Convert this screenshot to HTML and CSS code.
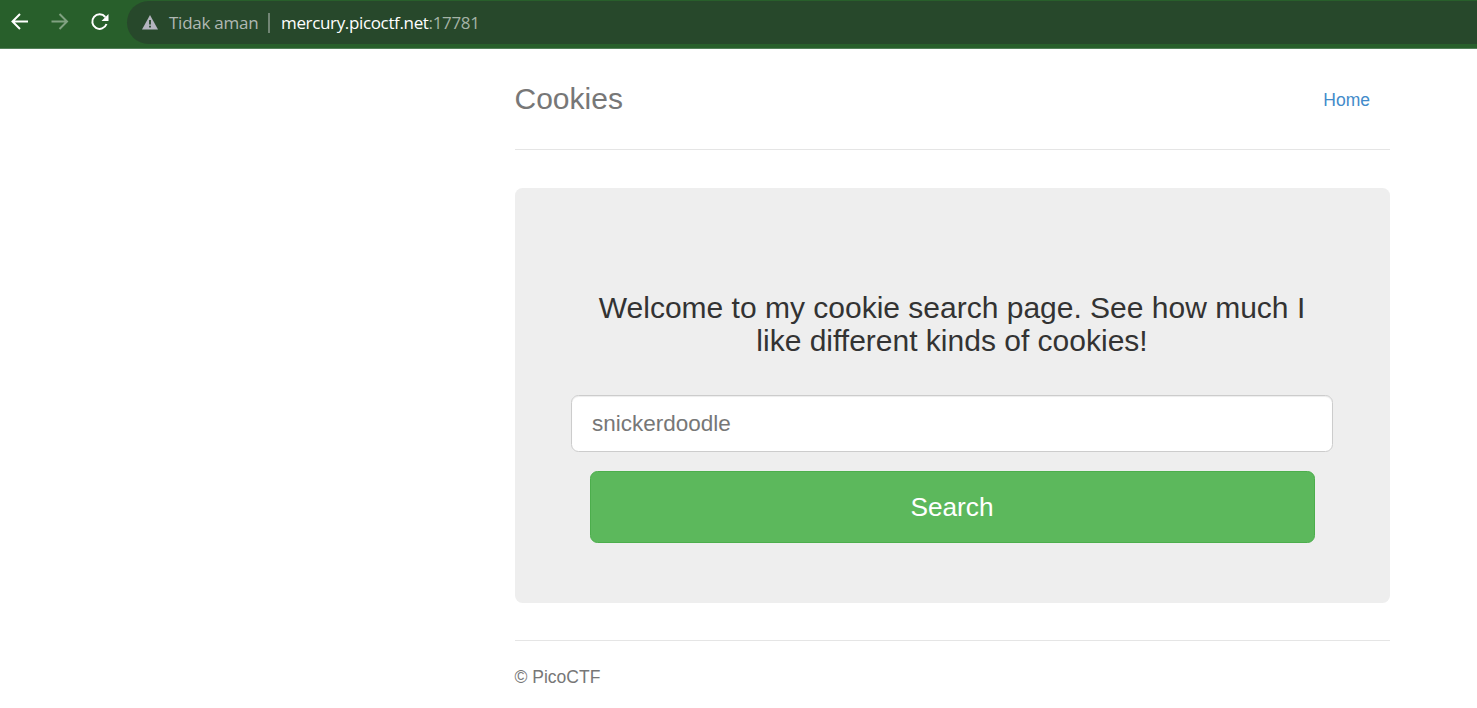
FILE: index.html
```html
<!DOCTYPE html>
<html lang="en">
<head>
<meta charset="utf-8">
<title>Cookies</title>
<link rel="stylesheet" href="styles.css">
</head>
<body>
<div class="toolbar">
  <svg class="nav-icons" width="127" height="44" viewBox="0 0 127 44" fill="none" stroke="#fff" stroke-width="2">
    <path d="M28 21.500H13M20 14l-7.500 7.500L20 29"/>
    <path class="dim" d="M51.500 21.500h15M59.500 14l7.500 7.500-7.500 7.500"/>
    <path d="M105.300 17A7.300 7.300 0 1 0 106.500 24"/>
    <path d="M108.500 14v7h-7z" fill="#fff" stroke="none"/>
  </svg>
  <div class="address">
    <svg class="warn" width="16" height="15" viewBox="0 0 16 15"><path d="M8 0l8 14.500H0z" fill="#b4b5bf"/><path d="M8 5v4.500M8 10.800v1.800" stroke="#27482b" stroke-width="1.800"/></svg>
    <span class="status">Tidak aman</span>
    <span class="divider"></span>
    <span class="url">mercury.picoctf.net<span class="port">:17781</span></span>
  </div>
</div>
<div class="container">
  <header class="header">
    <h3 class="brand">Cookies</h3>
    <a class="home">Home</a>
  </header>
  <main class="jumbotron">
    <p class="welcome">Welcome to my cookie search page. See how much I<br>like different kinds of cookies!</p>
    <input class="search-input" type="text" placeholder="snickerdoodle">
    <button class="search-button" type="button">Search</button>
  </main>
  <footer class="footer">© PicoCTF</footer>
</div>
</body>
</html>
```
FILE: styles.css
```css
* { box-sizing: border-box; }
body {
  margin: 0;
  background: #fff;
  color: #333;
  font: 17.5px/25px "Liberation Sans", Arial, sans-serif;
  overflow: hidden;
}
.toolbar {
  display: flex;
  align-items: flex-start;
  height: 49px;
  background: #285f2b;
  border-bottom: 1px solid #53805a;
}
.nav-icons { flex: none; }
.dim { stroke: #80a181; }
.address {
  display: flex;
  align-items: center;
  flex: 1;
  height: 43px;
  margin-top: 1px;
  padding-left: 15px;
  border-radius: 22px 0 0 22px;
  background: #27482b;
  font: 17px/24px "Open Sans", sans-serif;
  white-space: nowrap;
}
.warn { flex: none; }
.status { width: 89px; margin-left: 11px; color: #b0b8b3; letter-spacing: -0.25px; }
.divider { width: 2px; height: 20px; margin: 0 11px 0 10px; background: #718574; }
.url { color: #fff; letter-spacing: -0.35px; }
.port { color: #a4b3a6; }
.container { width: 875px; margin-left: 515px; }
.header {
  display: flex;
  justify-content: space-between;
  align-items: center;
  height: 101px;
  padding-right: 20px;
  border-bottom: 1px solid #e5e5e5;
}
.brand { margin: 0 0 0 -0.5px; color: #777; font-size: 30px; font-weight: 400; line-height: 50px; }
.home { padding-top: 2px; color: #428bca; }
.jumbotron {
  display: flex;
  flex-direction: column;
  align-items: center;
  height: 415px;
  margin-top: 38px;
  padding-top: 103px;
  border-radius: 7.5px;
  background: #eee;
}
.welcome { margin: 0 1px 0 0; font-size: 30px; line-height: 33px; text-align: center; white-space: nowrap; }
.search-input {
  width: 762px;
  height: 57px;
  margin: 38px 1px 19px 0;
  padding: 12px 20px;
  border: 1px solid #ccc;
  border-radius: 7.5px;
  background: #fff;
  box-shadow: inset 0 1px 1px rgba(0, 0, 0, .075);
  font: 22.5px "Liberation Sans", Arial, sans-serif;
}
.search-input::placeholder { color: #777; opacity: 1; }
.search-button {
  width: 725px;
  height: 72px;
  padding: 0 7px 0 6px;
  border: 1px solid #4cae4c;
  border-radius: 7.5px;
  background: #5cb85c;
  color: #fff;
  font: 26.25px "Liberation Sans", Arial, sans-serif;
}
.footer { margin-top: 37px; padding-top: 24px; border-top: 1px solid #e5e5e5; color: #777; text-indent: -0.5px; }
```
